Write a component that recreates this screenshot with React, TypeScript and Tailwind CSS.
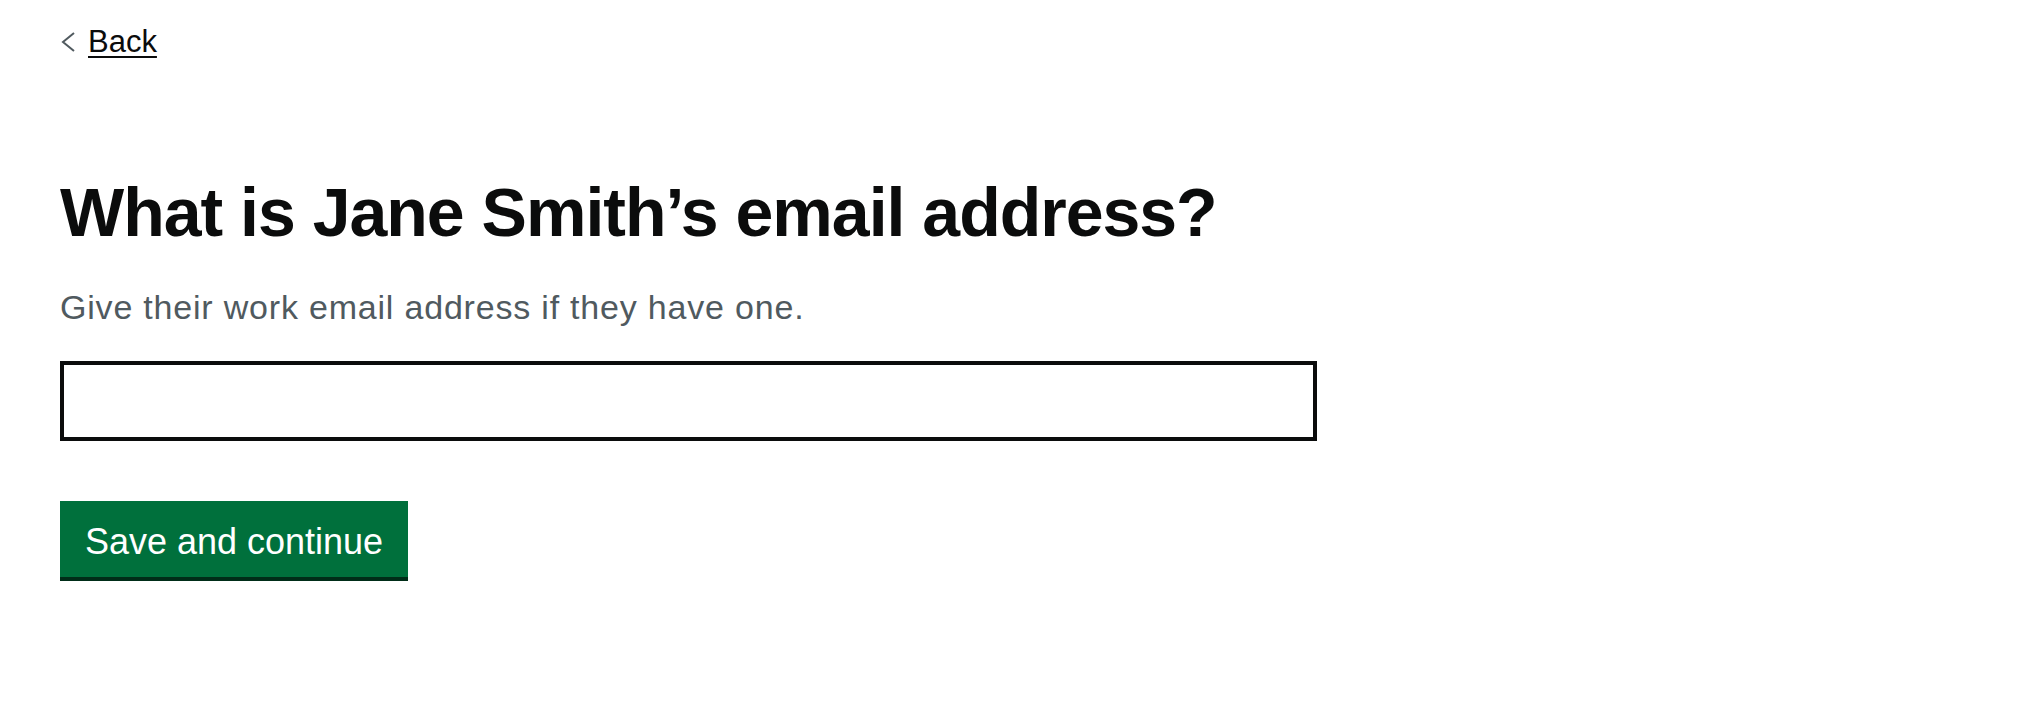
import React from 'react';

const App = () => {
    return (
        <div className="min-h-screen bg-white pl-[60px] pt-[22px] text-[#0b0c0c] font-['Liberation_Sans',Arial,sans-serif]">
            {/* Back link */}
            <a href="#" className="flex h-[40px] items-center gap-[11px] text-[31px] leading-[40px] text-[#0b0c0c]">
                <svg width="17" height="22" viewBox="0 0 17 22">
                    <polyline points="14,2 3,11 14,20" fill="none" stroke="#505a5f" strokeWidth="2" />
                </svg>
                <span className="underline decoration-2 underline-offset-[4px]">Back</span>
            </a>

            <h1 className="mt-[110px] text-[68px] leading-[80px] font-bold tracking-[-1px]">
                What is Jane Smith’s email address?
            </h1>

            <p className="mt-[30px] text-[34px] leading-[50px] tracking-[0.8px] text-[#505a5f]">
                Give their work email address if they have one.
            </p>

            <input
                type="email"
                className="mt-[29px] block h-[80px] w-[1257px] border-4 border-[#0b0c0c] bg-white px-[10px] text-[34px] outline-none"
            />

            <button className="mt-[60px] flex h-[76px] w-[348px] items-center justify-center bg-[#00703c] pt-[5px] text-[36px] leading-[40px] text-white shadow-[0_4px_0_#002d18]">
                Save and continue
            </button>
        </div>
    );
};

export default App;
